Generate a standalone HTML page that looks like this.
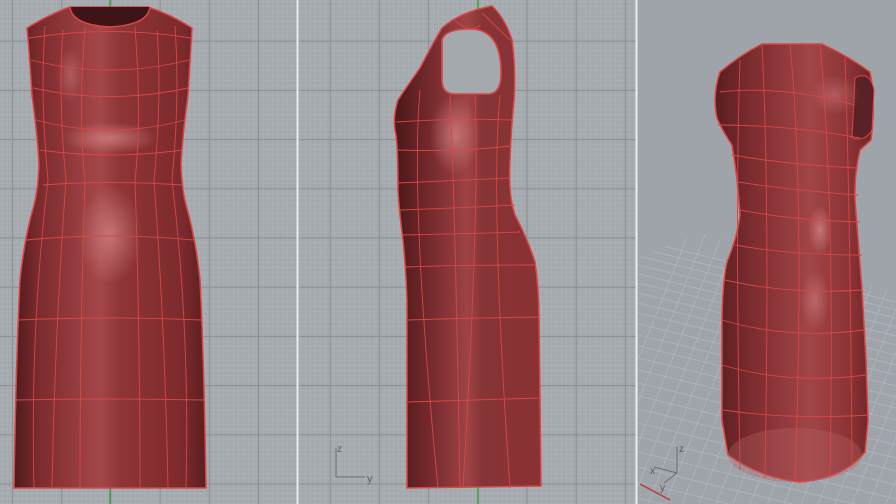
<!DOCTYPE html>
<html><head><meta charset="utf-8"><style>
html,body{margin:0;padding:0;width:896px;height:504px;overflow:hidden;background:#a3a8ae}
svg{display:block;overflow:hidden;position:absolute;left:0;top:0}
text{font-family:"Liberation Sans",sans-serif}
</style></head><body>
<svg width="896" height="504" viewBox="0 0 896 504" xmlns="http://www.w3.org/2000/svg">
<defs>
<pattern id="minor" x="12" y="40.7" width="4.92" height="4.92" patternUnits="userSpaceOnUse">
<path d="M0 0H4.92M0 0V4.92" stroke="#b1b5b9" stroke-width="1" fill="none"/>
</pattern>
<pattern id="major" x="12" y="40.7" width="49.2" height="49.2" patternUnits="userSpaceOnUse">
<path d="M0.5 0V49.2M0 0.5H49.2" stroke="#8a8f95" stroke-width="1" fill="none"/>
</pattern>
<pattern id="minor2" x="329.7" y="40.7" width="4.92" height="4.92" patternUnits="userSpaceOnUse">
<path d="M0 0H4.92M0 0V4.92" stroke="#b1b5b9" stroke-width="1" fill="none"/>
</pattern>
<pattern id="major2" x="329.7" y="40.7" width="49.2" height="49.2" patternUnits="userSpaceOnUse">
<path d="M0.5 0V49.2M0 0.5H49.2" stroke="#8a8f95" stroke-width="1" fill="none"/>
</pattern>
<linearGradient id="gf" x1="0" x2="1" y1="0" y2="0">
<stop offset="0" stop-color="#4e1a1c"/><stop offset="0.12" stop-color="#7a2a2d"/>
<stop offset="0.45" stop-color="#a4474a"/><stop offset="0.55" stop-color="#8e3537"/>
<stop offset="0.88" stop-color="#7c2a2d"/><stop offset="1" stop-color="#5a1e20"/>
</linearGradient>
<linearGradient id="gs" x1="0" x2="1" y1="0" y2="0">
<stop offset="0" stop-color="#4a181a"/><stop offset="0.2" stop-color="#6e2629"/>
<stop offset="0.5" stop-color="#9e4346"/><stop offset="0.6" stop-color="#863436"/>
<stop offset="1" stop-color="#8a3134"/>
</linearGradient>
<linearGradient id="gp" x1="0" x2="1" y1="0" y2="0">
<stop offset="0" stop-color="#5a1e20"/><stop offset="0.25" stop-color="#7e2d30"/>
<stop offset="0.6" stop-color="#a14548"/><stop offset="0.85" stop-color="#8a3336"/>
<stop offset="1" stop-color="#6e2528"/>
</linearGradient>
<radialGradient id="hl"><stop offset="0" stop-color="#d98a8c" stop-opacity="0.7"/><stop offset="1" stop-color="#d98a8c" stop-opacity="0"/></radialGradient>
<clipPath id="floor"><path d="M638 258 L700 233 L896 292 L896 504 L638 504 Z"/></clipPath>
</defs>

<rect x="0" y="0" width="297" height="504" fill="#a4a9ae"/>
<rect x="0" y="0" width="297" height="504" fill="url(#minor)"/>
<rect x="0" y="0" width="297" height="504" fill="url(#major)"/>
<line x1="110" y1="0" x2="110" y2="504" stroke="#3ea03e" stroke-width="1.5"/>
<rect x="299" y="0" width="337" height="504" fill="#a4a9ae"/>
<rect x="299" y="0" width="337" height="504" fill="url(#minor2)"/>
<rect x="299" y="0" width="337" height="504" fill="url(#major2)"/>
<line x1="478" y1="0" x2="478" y2="504" stroke="#3ea03e" stroke-width="1.5"/>
<rect x="638" y="0" width="258" height="504" fill="#9ea4aa"/>
<g clip-path="url(#floor)" stroke="#b6babe" stroke-width="0.8" opacity="0.8">
<path d="M638 240 L896 302 M638 248 L896 310 M638 256 L896 318 M638 265 L896 327 M638 274 L896 336 M638 283 L896 345 M638 293 L896 355 M638 303 L896 365 M638 313 L896 375 M638 324 L896 386 M638 335 L896 397 M638 346 L896 408 M638 358 L896 420 M638 370 L896 432 M638 383 L896 445 M638 396 L896 458 M638 409 L896 471 M638 423 L896 485 M638 437 L896 499 M638 452 L896 514 M638 467 L896 529 M638 482 L896 544 M638 498 L896 560"/>
<path d="M690 230 L580 504 M707 230 L597 504 M724 230 L614 504 M741 230 L631 504 M758 230 L648 504 M775 230 L665 504 M792 230 L682 504 M809 230 L699 504 M826 230 L716 504 M843 230 L733 504 M860 230 L750 504 M877 230 L767 504 M894 230 L784 504 M911 230 L801 504 M928 230 L818 504 M945 230 L835 504 M962 230 L852 504 M979 230 L869 504 M996 230 L886 504"/>
</g>
<line x1="297.5" y1="0" x2="297.5" y2="504" stroke="#e8ecf2" stroke-width="2"/>
<line x1="636.5" y1="0" x2="636.5" y2="504" stroke="#e8ecf2" stroke-width="2"/>

<path d="M70 7 L148 7 Q170 14 192 28 Q190 60 188 95 Q182 140 181 165 Q182 190 186 205 Q196 240 200 280 Q204 360 206 488 L14 488 Q16 360 20 280 Q24 240 34 205 Q38 190 39 165 Q38 140 32 95 Q30 60 27 28 Q50 14 70 7 Z" fill="url(#gf)" stroke="#d94545" stroke-width="1.5"/>
<path d="M70 7 L150 7 Q148 25 110 27 Q72 25 70 7 Z" fill="#3e1416"/>
<path d="M70 7 Q72 25 110 27 Q148 25 150 7" fill="none" stroke="#d94545" stroke-width="1.5"/>
<ellipse cx="110" cy="138" rx="48" ry="16" fill="url(#hl)"/>
<ellipse cx="110" cy="235" rx="32" ry="50" fill="url(#hl)"/>
<ellipse cx="70" cy="75" rx="14" ry="28" fill="url(#hl)" opacity="0.6"/>
<g fill="none" stroke="#d84646" stroke-width="0.9">
<path d="M29 38 Q110 25 191 38 M31 60 Q110 80 189 60 M33 88 Q110 105 188 88 M36 120 Q110 140 185 120 M40 150 Q110 160 182 150 M43 185 Q110 180 182 185 M26 240 Q110 232 194 240 M18 320 Q110 316 202 320 M15 400 Q110 398 205 400"/>
<path d="M63 30 Q58 100 66 180 Q55 330 52 488 M85 27 Q78 120 85 180 Q80 330 80 488 M135 27 Q142 120 135 180 Q140 330 140 488 M157 30 Q162 100 154 180 Q165 330 168 488 M45 26 Q40 100 48 180 Q30 330 34 488 M175 26 Q180 100 172 180 Q190 330 186 488"/>
</g>

<path d="M492 6 Q505 18 512 40 Q516 70 514 100 Q511 130 510 160 Q508 195 515 215 Q528 240 535 262 Q539 290 539 320 L540 400 L541 486 L407 488 L407 400 L407 300 Q406 270 403 240 Q399 210 398 190 Q398 150 396 135 Q392 118 398 100 Q408 85 420 68 Q432 45 442 28 Q460 12 492 6 Z" fill="url(#gs)" stroke="#d94545" stroke-width="1.5"/>
<ellipse cx="455" cy="135" rx="25" ry="40" fill="url(#hl)"/>
<path d="M442 40 Q445 29 470 29 Q500 29 501 70 Q502 94 488 94 L455 94 Q442 94 442 80 Z" fill="#a4a9ae" stroke="#d94545" stroke-width="1.6"/>
<g fill="none" stroke="#d84646" stroke-width="0.9">
<path d="M396 122 Q460 118 512 120 M397 150 Q460 152 510 146 M398 183 Q460 180 510 178 M399 210 Q460 208 515 205 M402 235 Q460 234 520 232 M406 267 Q460 265 536 265 M408 320 Q470 318 539 317 M408 402 Q470 400 541 398"/>
<path d="M420 90 Q410 200 438 488 M450 95 Q455 200 460 488 M475 95 Q480 200 463 488 M500 95 Q490 200 510 488 M455 20 Q470 35 480 25 M482 13 Q500 30 510 40"/>
</g>
<g stroke="#6a6e72" stroke-width="1" fill="none"><path d="M336 448 V477 H365"/></g>
<text x="337" y="452" font-size="10" fill="#5e6266">z</text>
<text x="367" y="482" font-size="11" fill="#5e6266">y</text>

<path d="M762 44 L822 44 Q848 56 870 72 Q876 100 871 140 L860 150 Q854 175 855 200 Q858 240 862 290 L866 360 L868 420 L865 452 Q845 478 800 482 Q760 478 728 455 L722 420 L722 330 Q722 285 727 262 Q738 235 740 215 Q738 180 732 145 Q722 130 717 118 Q712 95 720 72 Q740 55 762 44 Z" fill="url(#gp)" stroke="#d94545" stroke-width="1.5"/>
<ellipse cx="795" cy="455" rx="67" ry="27" fill="#b76064" opacity="0.35"/>
<path d="M855 78 Q870 70 874 90 L872 130 Q865 142 852 138 Z" fill="#5a2226" stroke="#d94545" stroke-width="1"/>
<ellipse cx="835" cy="95" rx="25" ry="20" fill="url(#hl)" opacity="0.6"/>
<ellipse cx="820" cy="230" rx="12" ry="25" fill="url(#hl)"/>
<ellipse cx="815" cy="300" rx="15" ry="30" fill="url(#hl)" opacity="0.7"/>
<g fill="none" stroke="#d84646" stroke-width="0.9">
<path d="M720 92 Q780 85 855 105 M718 125 Q790 125 860 138 M732 155 Q790 165 858 168 M738 182 Q790 190 858 195 M740 210 Q790 220 860 222 M735 245 Q790 255 862 255 M725 280 Q790 295 862 290 M722 320 Q790 340 864 330 M722 365 Q790 385 866 375 M723 410 Q790 420 868 415"/>
<path d="M740 60 Q735 200 740 470 M762 45 Q770 200 765 478 M790 44 Q805 200 795 482 M820 45 Q835 200 830 478 M845 58 Q850 200 852 465"/>
</g>
<g stroke="#6a6e72" stroke-width="1" fill="none"><path d="M677 446 V473 L654 467 M677 473 L664 483"/></g>
<text x="679" y="452" font-size="10" fill="#55595d">z</text>
<text x="650" y="474" font-size="10" fill="#55595d">x</text>
<text x="660" y="491" font-size="10" fill="#55595d">y</text>
<line x1="640" y1="484" x2="670" y2="500" stroke="#b83a3a" stroke-width="1.5"/>
</svg>
</body></html>
